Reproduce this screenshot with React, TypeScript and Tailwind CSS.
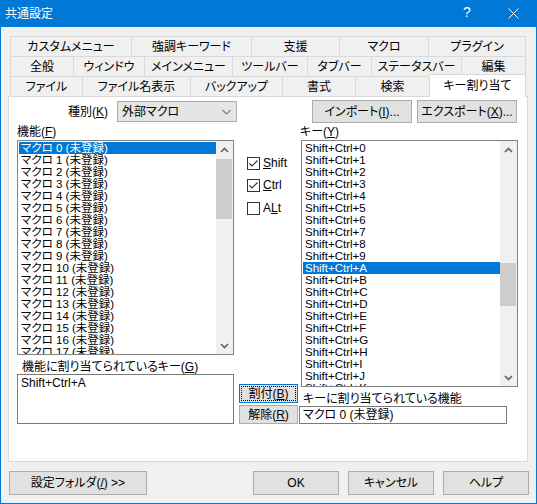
import React from 'react';

const FONT = "font-['Liberation_Sans','Noto_Sans_CJK_JP',sans-serif] [font-feature-settings:'palt']";

const row1: [string, number][] = [
  ['カスタムメニュー', 122],
  ['強調キーワード', 120],
  ['支援', 88],
  ['マクロ', 89],
  ['プラグイン', 97],
];
const row2: [string, number][] = [
  ['全般', 64],
  ['ウィンドウ', 71],
  ['メインメニュー', 88],
  ['ツールバー', 75],
  ['タブバー', 64],
  ['ステータスバー', 90],
  ['編集', 64],
];
const row3: [string, number][] = [
  ['ファイル', 73],
  ['ファイル名表示', 108],
  ['バックアップ', 92],
  ['書式', 73],
  ['検索', 74],
];

const macros = Array.from({ length: 18 }, (_, i) => `マクロ ${i} (未登録)`);
const keys = [...'0123456789ABCDEFGHIJK'].map(c => `Shift+Ctrl+${c}`);

const TabRow = ({ tabs, children }: { tabs: [string, number][]; children?: React.ReactNode }) => (
  <div className="flex h-[20px]">
    {tabs.map(([label, w], i) => (
      <div
        key={label}
        style={{ width: w }}
        className={`flex items-center justify-center border-t border-r border-[#d9d9d9] bg-[#f0f0f0] text-[12px] text-black ${i === 0 ? 'border-l' : ''}`}
      >
        {label}
      </div>
    ))}
    {children}
  </div>
);

const Chevron = ({ up }: { up?: boolean }) => (
  <svg width="9" height="6" viewBox="0 0 9 6">
    <path d={up ? 'M1 5 L4.5 1.5 L8 5' : 'M1 1 L4.5 4.5 L8 1'} stroke="#606060" strokeWidth="1.6" fill="none" />
  </svg>
);

const ScrollBar = ({ thumbTop, thumbH }: { thumbTop: number; thumbH: number }) => (
  <div className="flex w-[17px] flex-col bg-[#f0f0f0]">
    <div className="flex h-[17px] items-center justify-center">
      <Chevron up />
    </div>
    <div className="mr-px bg-[#cdcdcd]" style={{ marginTop: thumbTop, height: thumbH }} />
    <div className="flex-1" />
    <div className="flex h-[17px] items-center justify-center">
      <Chevron />
    </div>
  </div>
);

const ListBox = ({
  items,
  selected,
  height,
  thumbTop,
  thumbH,
}: {
  items: string[];
  selected: number;
  height: number;
  thumbTop: number;
  thumbH: number;
}) => (
  <div className="flex w-[217px] overflow-hidden border border-[#828282] bg-white" style={{ height }}>
    <div className="flex-1 overflow-hidden pt-px pl-px">
      {items.map((t, i) => (
        <div
          key={t}
          className={`h-[12px] whitespace-nowrap pl-[2px] text-[11.5px] leading-[12px] ${i === selected ? 'bg-[#0078d7] text-white' : 'text-black'}`}
        >
          {t}
        </div>
      ))}
    </div>
    <ScrollBar thumbTop={thumbTop} thumbH={thumbH} />
  </div>
);

const Check = ({ checked, children, className }: { checked: boolean; children: React.ReactNode; className?: string }) => (
  <div className={`ml-[8px] flex h-[13px] items-center ${className ?? ''}`}>
    <div className="flex h-[13px] w-[13px] items-center justify-center border border-[#333333] bg-white">
      {checked && (
        <svg width="11" height="11" viewBox="0 0 11 11">
          <path d="M1.5 5.5 L4 8 L9.5 2.5" stroke="#333333" strokeWidth="1.2" fill="none" />
        </svg>
      )}
    </div>
    <span className="ml-[3px] text-[12px] leading-[13px] text-black">{children}</span>
  </div>
);

const Btn = ({ children, className, focused }: { children: React.ReactNode; className?: string; focused?: boolean }) => (
  <div
    className={`flex items-center justify-center border bg-[#e1e1e1] text-[12px] text-black ${
      focused ? 'border-[#0078d7] outline-1 outline-offset-[-3px] outline-dotted outline-black' : 'border-[#adadad]'
    } ${className ?? ''}`}
  >
    {children}
  </div>
);

export default function App() {
  return (
    <div className={`flex h-[504px] w-[537px] flex-col border-x border-b border-[#0078d7] bg-[#f0f0f0] ${FONT}`}>
      {/* title bar */}
      <div className="flex h-[27px] shrink-0 items-center bg-[#0078d7] text-white">
        <span className="ml-[4px] text-[12px]">共通設定</span>
        <div className="ml-auto flex h-full w-[46px] items-center justify-center pb-[2px] text-[14px]">?</div>
        <div className="flex h-full w-[46px] items-center justify-center">
          <svg width="11" height="11" viewBox="0 0 11 11">
            <path d="M0.5 0.5 L10.5 10.5 M10.5 0.5 L0.5 10.5" stroke="white" strokeWidth="1" />
          </svg>
        </div>
      </div>

      <div className="flex flex-col px-[7px] pt-[9px]">
        {/* tabs */}
        <div className="ml-[2px] w-[516px]">
          <TabRow tabs={row1} />
          <TabRow tabs={row2} />
          <TabRow tabs={row3}>
            <div className="relative z-10 -mt-[2px] -ml-px flex h-[23px] w-[97px] items-center justify-center border-x border-t border-[#d9d9d9] bg-white text-[12px] text-black">
              キー割り当て
            </div>
          </TabRow>
        </div>

        {/* panel */}
        <div className="flex h-[366px] w-[520px] flex-col border border-[#d9d9d9] bg-white">
          <div className="mt-[3px] flex h-[23px] items-center">
            <div className="w-[99px] text-right text-[12px] text-black">
              種別(<u>K</u>)
            </div>
            <div className="ml-[9px] flex h-[21px] w-[120px] items-center border border-[#adadad] bg-[#e5e5e5] pl-[4px] pr-[5px] text-[12px] text-black">
              <span>外部マクロ</span>
              <svg className="ml-auto" width="9" height="6" viewBox="0 0 9 6">
                <path d="M0.5 1 L4.5 5 L8.5 1" stroke="#333333" strokeWidth="1" fill="none" />
              </svg>
            </div>
            <Btn className="ml-auto h-[23px] w-[100px]">
              インポート(<u>I</u>)...
            </Btn>
            <Btn className="mr-[10px] ml-[5px] h-[23px] w-[100px]">
              エクスポート(<u>X</u>)...
            </Btn>
          </div>

          <div className="ml-[8px] flex">
            {/* left column */}
            <div className="flex w-[217px] flex-col">
              <div className="flex h-[17px] items-center text-[12px] text-black">
                機能(<u>F</u>)
              </div>
              <ListBox items={macros} selected={0} height={215} thumbTop={1} thumbH={60} />
              <div className="h-[19px] pt-[6px] pl-[5px] text-[12px] leading-[12px] text-black">
                機能に割り当てられているキー(<u>G</u>)
              </div>
              <div className="h-[50px] border border-[#7a7a7a] bg-white pt-[2px] pl-[3px] text-[12px] leading-[12px] text-black">
                Shift+Ctrl+A
              </div>
            </div>

            {/* middle column */}
            <div className="ml-[5px] flex w-[60px] flex-col">
              <Check checked className="mt-[34px]">
                <u>S</u>hift
              </Check>
              <Check checked className="mt-[9px]">
                <u>C</u>trl
              </Check>
              <Check checked={false} className="mt-[10px]">
                A<u>L</u>t
              </Check>
              <Btn focused className="mt-[169px] h-[19px] w-[59px]">
                割付(<u>B</u>)
              </Btn>
              <Btn className="mt-[2px] h-[19px] w-[59px]">
                解除(<u>R</u>)
              </Btn>
            </div>

            {/* right column */}
            <div className="flex w-[218px] flex-col">
              <div className="flex h-[17px] items-center pl-px text-[12px] text-black">
                キー(<u>Y</u>)
              </div>
              <div className="ml-[2px]">
                <ListBox items={keys} selected={10} height={247} thumbTop={105} thumbH={43} />
              </div>
              <div className="h-[19px] pt-[6px] pl-[4px] text-[12px] leading-[12px] text-black">
                キーに割り当てられている機能
              </div>
              <div className="flex h-[18px] w-[208px] items-center border border-[#7a7a7a] bg-white pl-[3px] text-[12px] text-black">
                マクロ 0 (未登録)
              </div>
            </div>
          </div>
        </div>

        {/* bottom buttons */}
        <div className="mt-[9px] flex h-[24px] w-[521px]">
          <Btn className="ml-px h-[24px] w-[138px]">
            設定フォルダ(<u>/</u>) &gt;&gt;
          </Btn>
          <Btn className="ml-auto h-[24px] w-[86px]">OK</Btn>
          <Btn className="ml-[9px] h-[24px] w-[86px]">キャンセル</Btn>
          <Btn className="ml-[9px] h-[24px] w-[86px]">ヘルプ</Btn>
        </div>
      </div>
    </div>
  );
}
